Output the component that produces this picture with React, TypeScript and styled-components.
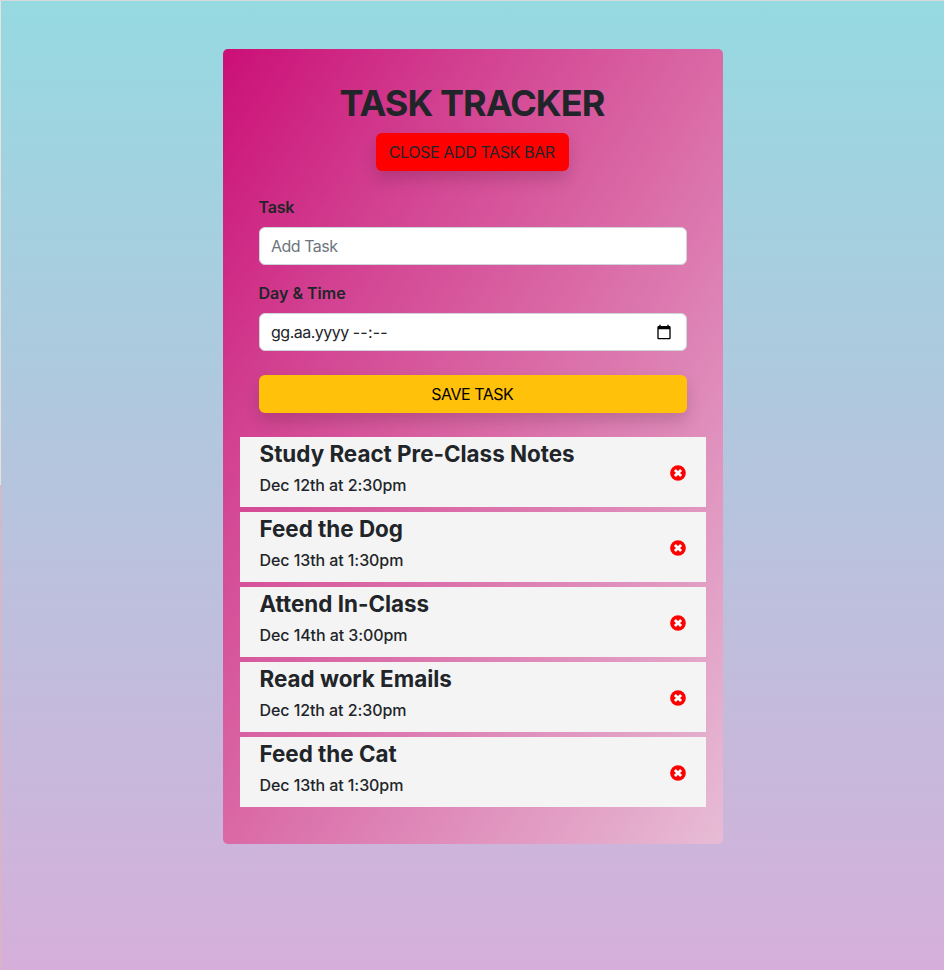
import React from "react";
import styled, { createGlobalStyle } from "styled-components";

const GlobalStyle = createGlobalStyle`
  *, *::before, *::after { box-sizing: border-box; }
  html, body, #root { height: 100%; }
  body {
    margin: 0;
    overflow: hidden;
    color: #212529;
    font: 400 16px/24px Inter, "Liberation Sans", sans-serif;
  }
`;

const Frame = styled.div`
  height: 970px;
  padding: 1px 0 0 1px;
  background:
    linear-gradient(#d5d9db, #d5d9db) 0 0 / 100% 1px no-repeat,
    linear-gradient(#ecdfe0 0 485px, #e9b0b5 485px, #dfb4bb 100%) 0 0 / 1px 100% no-repeat;
`;

const Page = styled.main`
  height: 969px;
  padding-top: 48px;
  background: linear-gradient(#96dae1, #d5afda);
`;

const Card = styled.section`
  width: 500px;
  height: 795px;
  margin-left: 222px;
  padding: 32px 17px 0;
  border-radius: 5px;
  background: linear-gradient(to right bottom, #cb0f77, #d24090 25%, #da69a6 50%, #e093be 75%, #e7bcd5);
`;

const Header = styled.header`
  display: flex;
  flex-direction: column;
  align-items: center;
  padding-right: 1px;
`;

const Title = styled.h1`
  margin: 0 0 8px;
  padding-right: 1px;
  font-size: 36px;
  line-height: 44px;
  font-weight: 700;
  letter-spacing: -0.95px;
  white-space: nowrap;
`;

const Button = styled.button<{ $tone: "danger" | "warning" }>`
  height: 38px;
  width: ${({ $tone }) => ($tone === "danger" ? "193px" : "100%")};
  padding: 0 1.5px 0 0;
  border: 0;
  border-radius: 6px;
  color: ${({ $tone }) => ($tone === "danger" ? "#212529" : "#000")};
  background: ${({ $tone }) => ($tone === "danger" ? "#ff0000" : "#ffc10a")};
  box-shadow: 0 8px 16px rgba(0, 0, 0, 0.15);
  font: inherit;
  letter-spacing: ${({ $tone }) => ($tone === "danger" ? "-0.38px" : "-0.5px")};
  white-space: nowrap;
`;

const Form = styled.form`
  padding: 24px 19px 24px;
`;

const Label = styled.label<{ $spacing?: string }>`
  display: block;
  margin: 0 0 8px -0.5px;
  font-weight: 600;
  letter-spacing: ${({ $spacing = "0" }) => $spacing};
`;

const Field = styled.div`
  display: flex;
  align-items: center;
  justify-content: space-between;
  height: 38px;
  margin-bottom: 16px;
  padding: 0 14px 0 11px;
  border: 1px solid #ced4da;
  border-radius: 6px;
  background: #fff;

  &:last-of-type { margin-bottom: 24px; }
`;

const Input = styled.input`
  width: 100%;
  padding: 0;
  border: 0;
  outline: 0;
  background: transparent;
  font: inherit;
  letter-spacing: -0.5px;
  &::placeholder { color: #6c757d; opacity: 1; }
`;

const DateText = styled.span`
  letter-spacing: -0.5px;
`;

const TimeText = styled.span`
  letter-spacing: 0.2px;
`;

const TaskList = styled.div`
  display: grid;
  gap: 5px;
`;

const TaskRow = styled.article`
  display: flex;
  align-items: center;
  justify-content: space-between;
  height: 70px;
  padding: 0 20px 0 19.5px;
  background: #f4f4f4;
`;

const TaskName = styled.h2`
  margin: 0 0 6px;
  font-size: 22.4px;
  line-height: 27px;
  font-weight: 700;
  letter-spacing: 0;
`;

const TaskDate = styled.p`
  margin: 0 0 7px;
  font-weight: 500;
  letter-spacing: -0.08px;
`;

const DeleteSvg = styled.svg`
  width: 16px;
  height: 16px;
  margin-top: 2px;
  flex: none;
`;

const DeleteIcon = () => (
  <DeleteSvg viewBox="0 0 16 16">
    <circle cx="8" cy="8" r="7.85" fill="#f00" />
    <path d="M4.900 4.900L11.100 11.100M11.100 4.900L4.900 11.100" stroke="#fff" strokeWidth="2.800" />
  </DeleteSvg>
);

const CalendarIcon = () => (
  <svg width="16" height="16" viewBox="0 0 24 24">
    <path d="M20 3h-1V1h-2v2H7V1H5v2H4c-1.100 0-2 .9-2 2v16c0 1.100.9 2 2 2h16c1.100 0 2-.9 2-2V5c0-1.100-.9-2-2-2zm0 18H4V8h16v13z" />
  </svg>
);

const tasks = [
  { id: 1, name: "Study React Pre-Class Notes", day: "Dec 12th at 2:30pm" },
  { id: 2, name: "Feed the Dog", day: "Dec 13th at 1:30pm" },
  { id: 3, name: "Attend In-Class", day: "Dec 14th at 3:00pm" },
  { id: 4, name: "Read work Emails", day: "Dec 12th at 2:30pm" },
  { id: 5, name: "Feed the Cat", day: "Dec 13th at 1:30pm" },
];

export default function App() {
  return (
    <Frame>
      <GlobalStyle />
      <Page>
        <Card>
          <Header>
            <Title>TASK TRACKER</Title>
            <Button $tone="danger">CLOSE ADD TASK BAR</Button>
          </Header>
          <Form onSubmit={(e) => e.preventDefault()}>
            <Label htmlFor="task" $spacing="-0.2px">Task</Label>
            <Field>
              <Input id="task" placeholder="Add Task" />
            </Field>
            <Label>Day &amp; Time</Label>
            <Field>
              <DateText>
                gg.aa.yyyy <TimeText>--:--</TimeText>
              </DateText>
              <CalendarIcon />
            </Field>
            <Button $tone="warning">SAVE TASK</Button>
          </Form>
          <TaskList>
            {tasks.map((task) => (
              <TaskRow key={task.id}>
                <div>
                  <TaskName>{task.name}</TaskName>
                  <TaskDate>{task.day}</TaskDate>
                </div>
                <DeleteIcon />
              </TaskRow>
            ))}
          </TaskList>
        </Card>
      </Page>
    </Frame>
  );
}
